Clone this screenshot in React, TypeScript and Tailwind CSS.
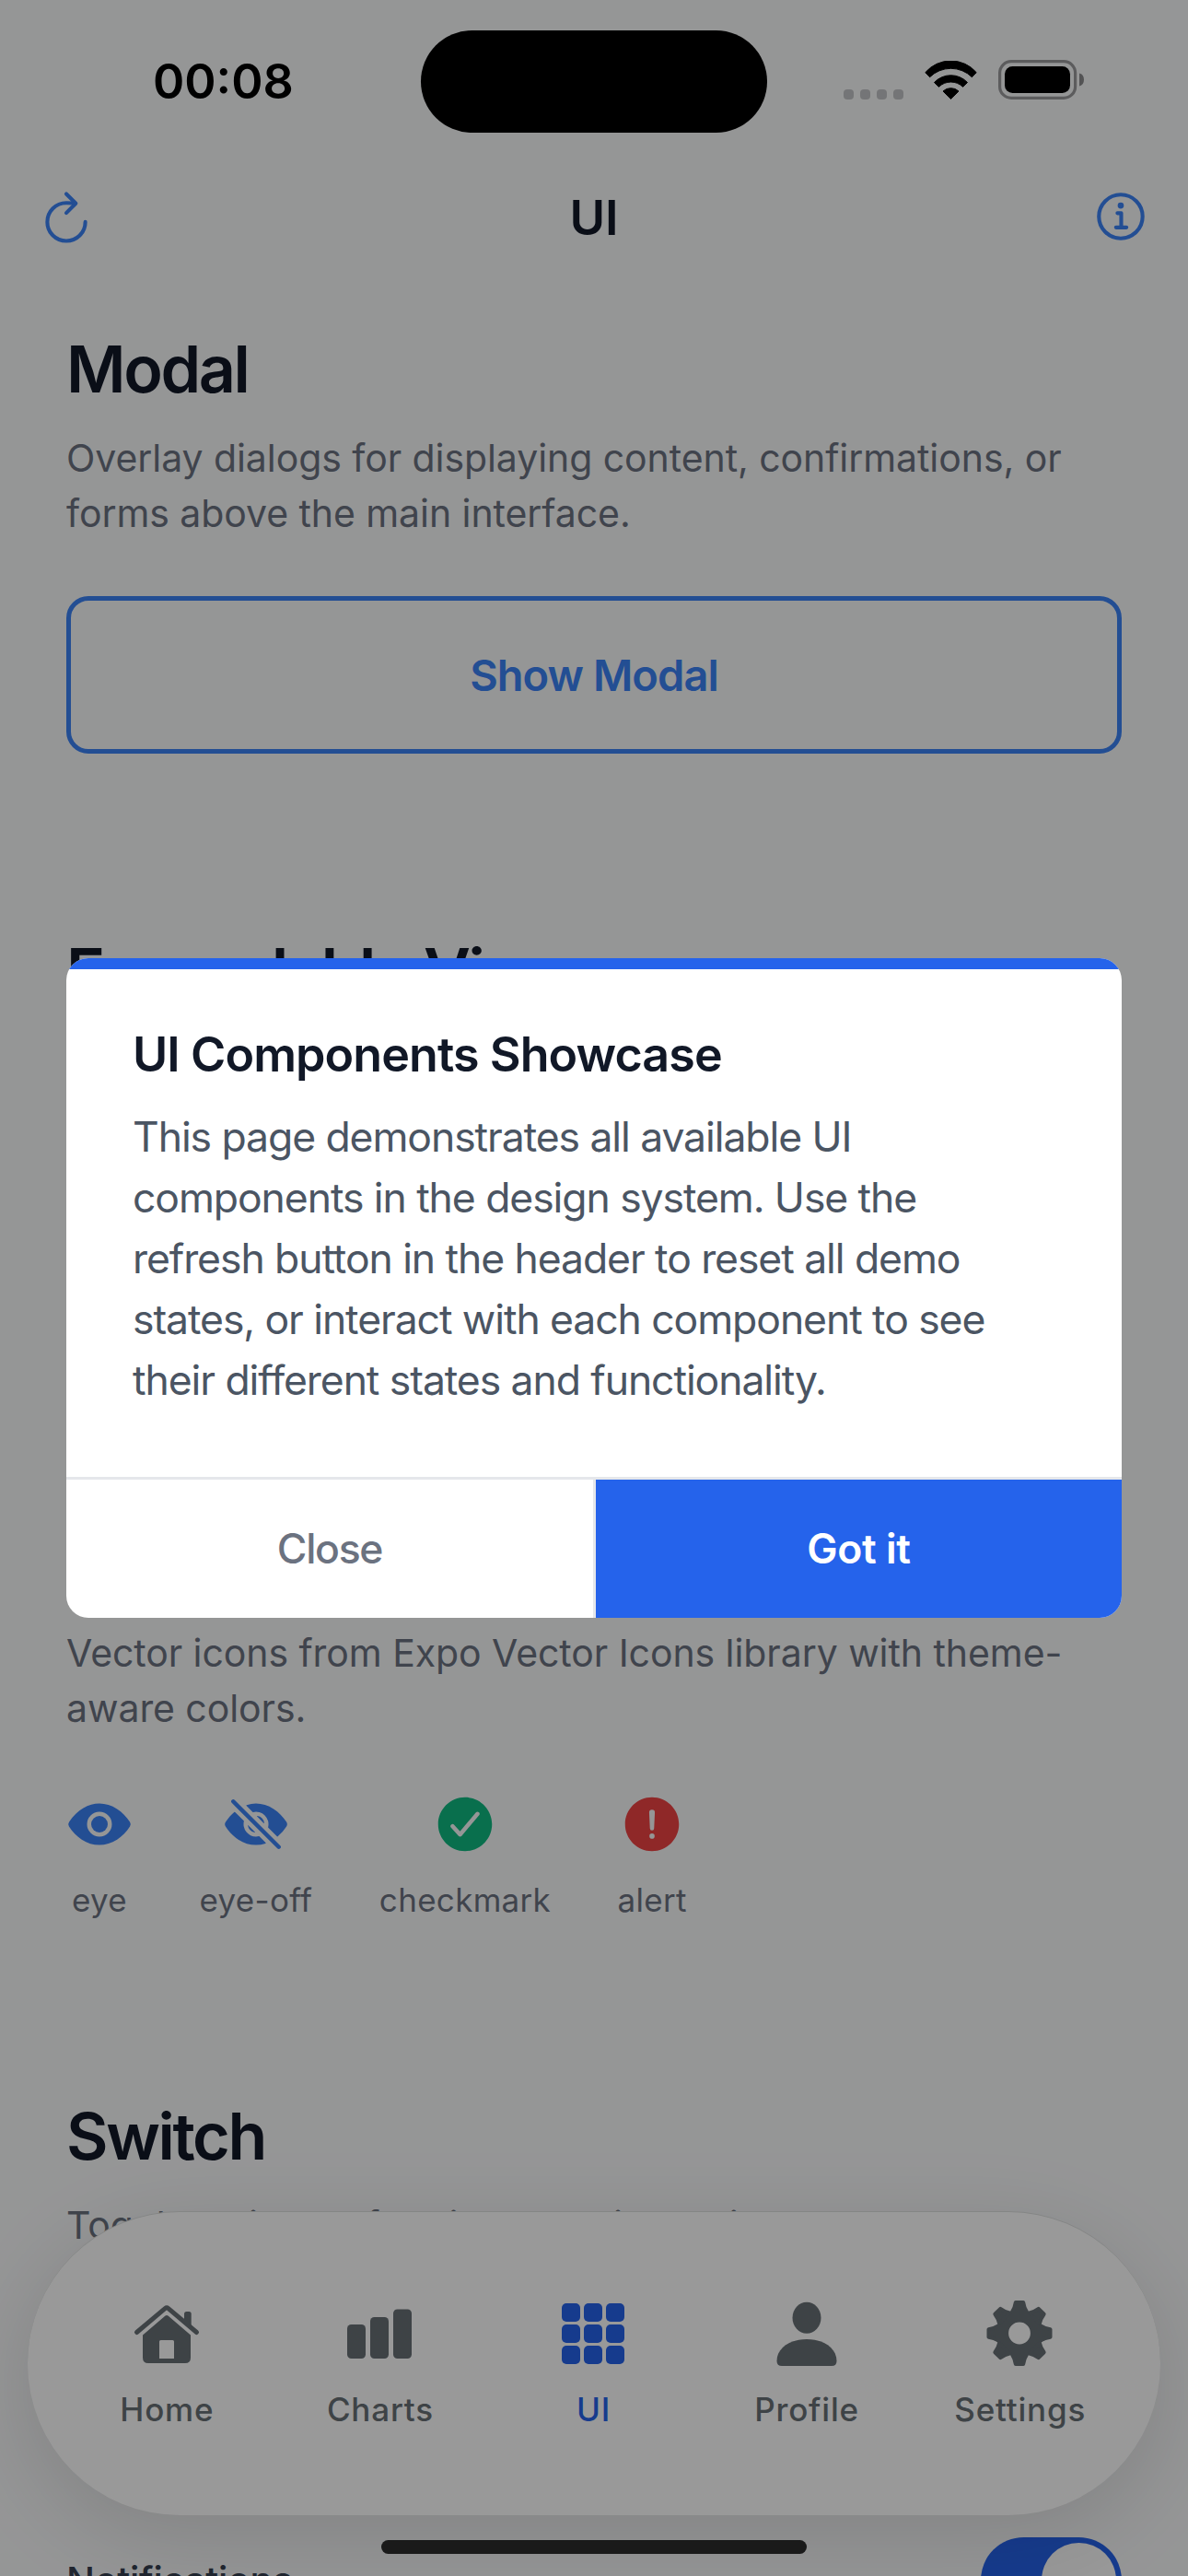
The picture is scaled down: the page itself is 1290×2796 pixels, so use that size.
import type { ReactNode } from "react";
import {
  IoAlertCircle,
  IoCheckmarkCircle,
  IoEye,
  IoEyeOff,
  IoInformationCircleOutline,
  IoRefreshOutline,
} from "react-icons/io5";

function Heading({ children }: { children: ReactNode }) {
  return (
    <h2 className="text-[70px] leading-[86px] font-semibold tracking-[-2.4px] text-[#111827]">{children}</h2>
  );
}

function Description({ children }: { children: ReactNode }) {
  return (
    <p className="mt-[23px] text-[41px] leading-[60px] tracking-[-0.07px] whitespace-nowrap text-[#6b7280]">
      {children}
    </p>
  );
}

function WifiIcon() {
  return (
    <svg className="h-[42px] w-[57px]" viewBox="0 0 57 42" fill="black" stroke="black" strokeWidth="1" strokeLinejoin="round">
      <path d="M.8 12.7A36.5 36.5 0 0 1 56.2 12.7L51.4 17.7A32.6 32.6 0 0 0 5.6 17.7Z" />
      <path d="M10.5 23.5A24.8 24.8 0 0 1 46.5 23.5L41.6 28.3A19 19 0 0 0 15.4 28.3Z" />
      <path d="M20 33A12.5 12.5 0 0 1 37 33L28.5 41.4Z" />
    </svg>
  );
}

function BatteryIcon() {
  return (
    <svg className="h-[43px] w-[93px]" viewBox="0 0 93 43">
      <rect x="1.6" y="1.6" width="82" height="39.8" rx="12.5" fill="none" stroke="#999a9c" strokeWidth="3.2" />
      <rect x="7" y="7" width="71" height="29" rx="8.5" fill="black" />
      <path d="M88 14.5C91.500 15.500 93 18 93 21.500S91.500 27.500 88 28.500Z" fill="#8a8b8c" />
    </svg>
  );
}

function StatusBar() {
  return (
    <div className="flex h-[177px] items-center">
      <div className="w-[457px] pl-[166px] text-[52px] font-semibold text-black">00:08</div>
      <div className="h-[111px] w-[376px] rounded-full bg-black" />
      <div className="flex items-center pl-[83px]">
        <div className="mt-[27px] flex gap-[7px]">
          {[0, 1, 2, 3].map((i) => (
            <div key={i} className="size-[11px] rounded-[4px] bg-[#c2c4c6]" />
          ))}
        </div>
        <div className="-mt-[4px] ml-[23px] flex items-center gap-[23px]">
          <WifiIcon />
          <BatteryIcon />
        </div>
      </div>
    </div>
  );
}

const glyphs = [
  { label: "eye", icon: <IoEye className="size-[72px] text-[#3b82f6]" /> },
  { label: "eye-off", icon: <IoEyeOff className="size-[72px] text-[#3b82f6]" /> },
  { label: "checkmark", icon: <IoCheckmarkCircle className="size-[72px] text-[#10b981]" /> },
  { label: "alert", icon: <IoAlertCircle className="size-[72px] text-[#ef4444]" /> },
];

function TabSvg({ children }: { children: ReactNode }) {
  return (
    <svg className="size-[84px]" viewBox="0 0 84 84" fill="currentColor">
      {children}
    </svg>
  );
}

const tabs = [
  {
    label: "Home",
    active: false,
    icon: (
      <TabSvg>
        <path d="M9.500 40.500 40.200 14.600Q42 13.200 43.800 14.600L74.500 40.500" fill="none" stroke="currentColor" strokeWidth="5" strokeLinecap="round" strokeLinejoin="round" />
        <path d="M61 20.500Q61 18 63.500 18H66.200Q68.700 18 68.700 20.500V36L61 29.500Z" />
        <path fillRule="evenodd" d="M40.500 22.600Q42 21.500 43.500 22.600L68 43.500V68Q68 74 62 74H22Q16 74 16 68V43.500ZM35.500 49Q34 49 34 50.500V69H50V50.500Q50 49 48.500 49Z" />
      </TabSvg>
    ),
  },
  {
    label: "Charts",
    active: false,
    icon: (
      <TabSvg>
        <rect x="7" y="32" width="20" height="37" rx="4.500" />
        <rect x="32" y="24" width="20" height="45" rx="4.500" />
        <rect x="57" y="15.500" width="20" height="53.500" rx="4.500" />
      </TabSvg>
    ),
  },
  {
    label: "UI",
    active: true,
    icon: (
      <TabSvg>
        {[9, 32, 55].map((y) => [8, 32, 56].map((x) => <rect key={`${x}-${y}`} x={x} y={y} width="20" height="20" rx="5" />))}
      </TabSvg>
    ),
  },
  {
    label: "Profile",
    active: false,
    icon: (
      <TabSvg>
        <ellipse cx="42" cy="24.700" rx="15.500" ry="17" />
        <path d="M9.500 71.500C9.500 57.500 24 48 42 48S74.500 57.500 74.500 71.500Q74.500 77 69 77H15Q9.500 77 9.500 71.500Z" />
      </TabSvg>
    ),
  },
  {
    label: "Settings",
    active: false,
    icon: (
      <TabSvg>
        <g transform="translate(42 41.500)">
          <circle r="18.700" fill="none" stroke="currentColor" strokeWidth="13.600" />
          {[0, 45, 90, 135, 180, 225, 270, 315].map((a) => (
            <path key={a} transform={`rotate(${a})`} d="M-4.200-33.500H4.200Q5.200-27 8-23H-8Q-5.200-27-4.200-33.500Z" stroke="currentColor" strokeWidth="4" strokeLinejoin="round" />
          ))}
        </g>
      </TabSvg>
    ),
  },
];

function TabBar() {
  return (
    <nav className="absolute top-[2400px] right-[30px] left-[30px] flex h-[330px] rounded-full border-t border-[#dcdfde] bg-white pt-[90px] pr-[37px] pl-[35px] shadow-[0_24px_96px_rgba(0,0,0,0.125)]">
      {tabs.map((t) => (
        <div
          key={t.label}
          className={
            t.active
              ? "flex w-0 flex-1 flex-col items-center gap-[17px] text-[#2563eb]"
              : "flex w-0 flex-1 flex-col items-center gap-[17px] text-[#687076]"
          }
        >
          {t.icon}
          <span className="-mr-px text-[35px] leading-[46px] font-medium tracking-[0.8px]">{t.label}</span>
        </div>
      ))}
    </nav>
  );
}

function Dialog() {
  return (
    <div className="absolute inset-0 flex items-center bg-black/40 px-[72px]">
      <div className="flex-1 overflow-hidden rounded-[24px] bg-white">
        <div className="h-[12px] bg-[#2563eb]" />
        <div className="px-[72px] pt-[60px] pb-[72px]">
          <h3 className="text-[52px] leading-[66px] font-semibold tracking-[-0.92px] text-[#111827]">
            UI Components Showcase
          </h3>
          <p className="mt-[23px] text-[44.5px] leading-[66px] tracking-[-1.08px] whitespace-nowrap text-[#4b5563]">
            This page demonstrates all available UI
            <br />
            components in the design system. Use the
            <br />
            refresh button in the header to reset all demo
            <br />
            states, or interact with each component to see
            <br />
            their different states and functionality.
          </p>
        </div>
        <div className="flex h-[153px] border-t-[3px] border-[#e5e7eb] text-[44.5px]">
          <button className="flex-1 border-r-[3px] border-[#e5e7eb] font-medium tracking-[-1.3px] text-[#6b7280]">
            Close
          </button>
          <button className="w-[571px] bg-[#2563eb] font-semibold tracking-[-0.4px] text-white">Got it</button>
        </div>
      </div>
    </div>
  );
}

export default function App() {
  return (
    <div className="relative h-[2796px] w-[1290px] overflow-hidden bg-[#f9fafb] font-['Inter',sans-serif]">
      <StatusBar />
      <header className="flex h-[118px] items-center justify-between px-[39px]">
        <IoRefreshOutline className="size-[66px] text-[#3b82f6]" />
        <h1 className="text-[52.5px] font-semibold text-[#111827]">UI</h1>
        <IoInformationCircleOutline className="size-[66px] text-[#3b82f6]" />
      </header>

      <main className="px-[72px] pt-[63px]">
        <section className="h-[654px]">
          <Heading>Modal</Heading>
          <Description>
            Overlay dialogs for displaying content, confirmations, or
            <br />
            forms above the main interface.
          </Description>
          <button className="mt-[60px] h-[171px] w-full rounded-[24px] border-[5px] border-[#3b82f6] pt-px text-[47px] font-semibold tracking-[-0.95px] text-[#3b82f6]">
            Show Modal
          </button>
        </section>

        <section className="h-[643px]">
          <Heading>Expandable View</Heading>
        </section>

        <section className="h-[621px]">
          <Heading>Icons</Heading>
          <Description>
            Vector icons from Expo Vector Icons library with theme-
            <br />
            aware colors.
          </Description>
          <div className="mt-[60px] flex gap-[72.5px]">
            {glyphs.map((g) => (
              <div key={g.label} className="flex flex-col items-center gap-[21px]">
                {g.icon}
                <span className="text-[35px] leading-[50px] tracking-[0.3px] text-[#6b7280]">{g.label}</span>
              </div>
            ))}
          </div>
        </section>

        <section>
          <Heading>Switch</Heading>
          <Description>Toggle switches for binary settings with theme</Description>
          <div className="mt-[309px] flex items-center justify-between">
            <span className="text-[41px] leading-[60px] font-medium tracking-[-0.26px] text-[#374151]">
              Notifications
            </span>
            <div className="flex h-[93px] w-[153px] justify-end rounded-full bg-[#2563eb] p-[6px]">
              <div className="size-[81px] rounded-full bg-white" />
            </div>
          </div>
        </section>
      </main>

      <TabBar />
      <Dialog />
      <div className="absolute top-[2757px] left-[414px] h-[15px] w-[462px] rounded-full bg-[#1a1a1a]" />
    </div>
  );
}
